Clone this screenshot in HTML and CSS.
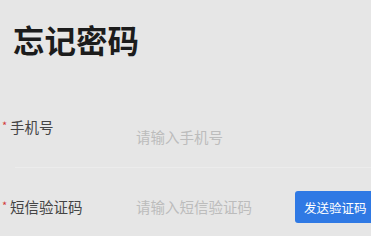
FILE: index.html
```html
<!DOCTYPE html>
<html lang="zh">
<head>
<meta charset="utf-8">
<link rel="stylesheet" href="styles.css">
</head>
<body>
<div class="page">
  <h1 class="title">忘记密码</h1>
  <div class="row row-phone">
    <label class="label"><span class="star">*</span>手机号</label>
    <div class="input">请输入手机号</div>
  </div>
  <div class="divider"></div>
  <div class="row row-code">
    <label class="label"><span class="star">*</span>短信验证码</label>
    <div class="input">请输入短信验证码</div>
    <button class="send">发送验证码</button>
  </div>
</div>
</body>
</html>
```

FILE: styles.css
```css
html, body {
  margin: 0;
  padding: 0;
  background: #e6e6e6;
  overflow: hidden;
}
.page {
  width: 371px;
  height: 236px;
  font-family: "Noto Sans CJK SC", "Noto Sans", sans-serif;
  overflow: hidden;
}
.title {
  margin: 0;
  padding: 19px 0 0 13px;
  font-size: 31.5px;
  line-height: 40px;
  font-weight: 700;
  color: #1c1c1c;
}
.row {
  display: flex;
  padding-left: 2px;
}
.row-phone {
  margin-top: 58px;
  height: 50px;
  align-items: flex-start;
}
.row-phone .input {
  margin-top: 10px;
}
.label {
  width: 134px;
  flex: none;
  font-size: 14.5px;
  line-height: 20px;
  color: #444444;
  display: flex;
  align-items: center;
}
.star {
  color: #d23a3a;
  font-size: 11px;
  width: 8px;
  margin-top: -5px;
}
.input {
  flex: 1;
  font-size: 14.5px;
  line-height: 20px;
  color: #bcbcbc;
}
.divider {
  margin-left: 15px;
  height: 1px;
  background: #ececec;
}
.row-code {
  padding-top: 23px;
  height: 32px;
  align-items: center;
}
.send {
  flex: none;
  width: 82px;
  height: 32px;
  margin-left: auto;
  margin-right: -6px;
  border: none;
  border-radius: 3px;
  background: #2f79e4;
  color: #ffffff;
  font-family: "Noto Sans CJK SC", sans-serif;
  font-size: 12.5px;
  text-align: left;
  padding: 0 0 0 9px;
}
```
